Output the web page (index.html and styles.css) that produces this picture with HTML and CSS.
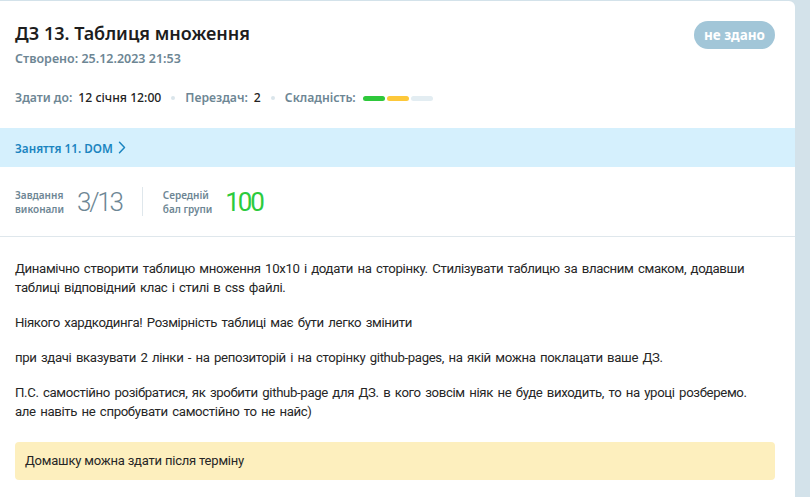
FILE: index.html
```html
<!DOCTYPE html>
<html lang="uk">
<head>
<meta charset="utf-8">
<link rel="stylesheet" href="styles.css">
</head>
<body>
<div class="page">
  <div class="card">
    <div class="head">
      <div class="head-main">
        <h1 class="title">ДЗ 13. Таблиця множення</h1>
        <div class="created">Створено: 25.12.2023 21:53</div>
        <div class="meta">
          <span class="label">Здати до:</span><span class="value">12 січня 12:00</span>
          <span class="dot"></span>
          <span class="label">Перездач:</span><span class="value">2</span>
          <span class="dot"></span>
          <span class="label">Складність:</span>
          <span class="bars"><span class="bar green"></span><span class="bar yellow"></span><span class="bar grey"></span></span>
        </div>
      </div>
      <span class="badge">не здано</span>
    </div>
    <div class="lesson">
      <span class="lesson-link">Заняття 11. DOM</span>
      <svg class="chev" width="8" height="13" viewBox="0 0 8 13"><path d="M1.5 1.2 L6.5 6.5 L1.5 11.8" fill="none" stroke="#1a84c0" stroke-width="1.5" stroke-linecap="round" stroke-linejoin="round"/></svg>
    </div>
    <div class="stats">
      <div class="stat">
        <div class="stat-label">Завдання<br>виконали</div>
        <div class="stat-num">3/13</div>
      </div>
      <div class="divider"></div>
      <div class="stat">
        <div class="stat-label">Середній<br>бал групи</div>
        <div class="stat-num green-num">100</div>
      </div>
    </div>
    <div class="desc">
      <p>Динамічно створити таблицю множення 10x10 і додати на сторінку. Стилізувати таблицю за власним смаком, додавши таблиці відповідний клас і стилі в css файлі.</p>
      <p>Ніякого хардкодинга! Розмірність таблиці має бути легко змінити</p>
      <p>при здачі вказувати 2 лінки - на репозиторій і на сторінку github-pages, на якій можна поклацати ваше ДЗ.</p>
      <p>П.С. самостійно розібратися, як зробити github-page для ДЗ. в кого зовсім ніяк не буде виходить, то на уроці розберемо. але навіть не спробувати самостійно то не найс)</p>
      <div class="note">Домашку можна здати після терміну</div>
    </div>
  </div>
</div>
</body>
</html>
```

FILE: styles.css
```css
html, body {
  margin: 0;
  padding: 0;
}
body {
  background: #d3e2ea;
  font-family: "Noto Sans", "Liberation Sans", sans-serif;
  color: #1f1f1f;
}
.page {
  padding-top: 1px;
  width: 795px;
}
.card {
  background: #fff;
  border-radius: 0 6px 0 0;
  min-height: 496px;
}
.head {
  display: flex;
  justify-content: space-between;
  align-items: flex-start;
  padding: 20px 20px 22px 15px;
}
.title {
  margin: 0;
  font-size: 18px;
  line-height: 24px;
  font-weight: 600;
  color: #1d1d1d;
}
.created {
  margin-top: 6px;
  font-size: 12.5px;
  line-height: 16px;
  font-weight: 600;
  color: #6d8694;
}
.meta {
  margin-top: 23px;
  display: flex;
  align-items: center;
  font-size: 12.2px;
  line-height: 16px;
  font-weight: 600;
}
.label {
  color: #6d8694;
  margin-right: 6px;
}
.value {
  color: #222;
  font-weight: 500;
}
.dot {
  width: 4px;
  height: 4px;
  border-radius: 50%;
  background: #dae5eb;
  margin: 0 10px;
}
.bars {
  display: flex;
  gap: 2px;
  margin-left: 1px;
}
.bar {
  width: 22px;
  height: 5px;
  border-radius: 3px;
}
.bar.green { background: #2ec83b; }
.bar.yellow { background: #fdc83a; }
.bar.grey { background: #e3edf2; }
.badge {
  height: 28px;
  line-height: 28px;
  padding: 0 10px;
  border-radius: 14px;
  background: #a2c6d8;
  color: #fff;
  font-weight: 700;
  font-size: 13.5px;
}
.lesson {
  background: #d5f0fd;
  height: 39px;
  display: flex;
  align-items: center;
  padding-left: 15px;
  gap: 5px;
}
.lesson-link {
  color: #1a84c0;
  font-size: 11.7px;
  font-weight: 600;
}
.stats {
  display: flex;
  align-items: center;
  height: 69px;
  padding-left: 15px;
  border-bottom: 1px solid #dfe7ec;
}
.stat {
  display: flex;
  align-items: center;
  gap: 13px;
}
.stat-label {
  font-size: 10px;
  line-height: 14px;
  font-weight: 600;
  color: #6d8694;
}
.stat-num {
  font-family: Roboto, "Noto Sans", sans-serif;
  font-size: 26px;
  font-weight: 300;
  letter-spacing: -2.2px;
  color: #6d8694;
  line-height: 30px;
}
.green-num {
  color: #2ccb3d;
  font-weight: 400;
}
.divider {
  width: 1px;
  height: 29px;
  background: #dfe7ec;
  margin: 0 20px;
}
.desc {
  padding: 22px 20px 20px 15px;
  font-family: Roboto, "Noto Sans", sans-serif;
  font-size: 13.2px;
  letter-spacing: -0.35px;
  word-spacing: 1.5px;
  line-height: 19px;
  color: #262626;
}
.desc p {
  margin: 0 5px 16px 0;
}
.note {
  margin-top: 21px;
  background: #fdefbe;
  border-radius: 4px;
  padding: 10px 10px;
  font-size: 13px;
  letter-spacing: -0.2px;
  word-spacing: 0;
  line-height: 18px;
}
```
